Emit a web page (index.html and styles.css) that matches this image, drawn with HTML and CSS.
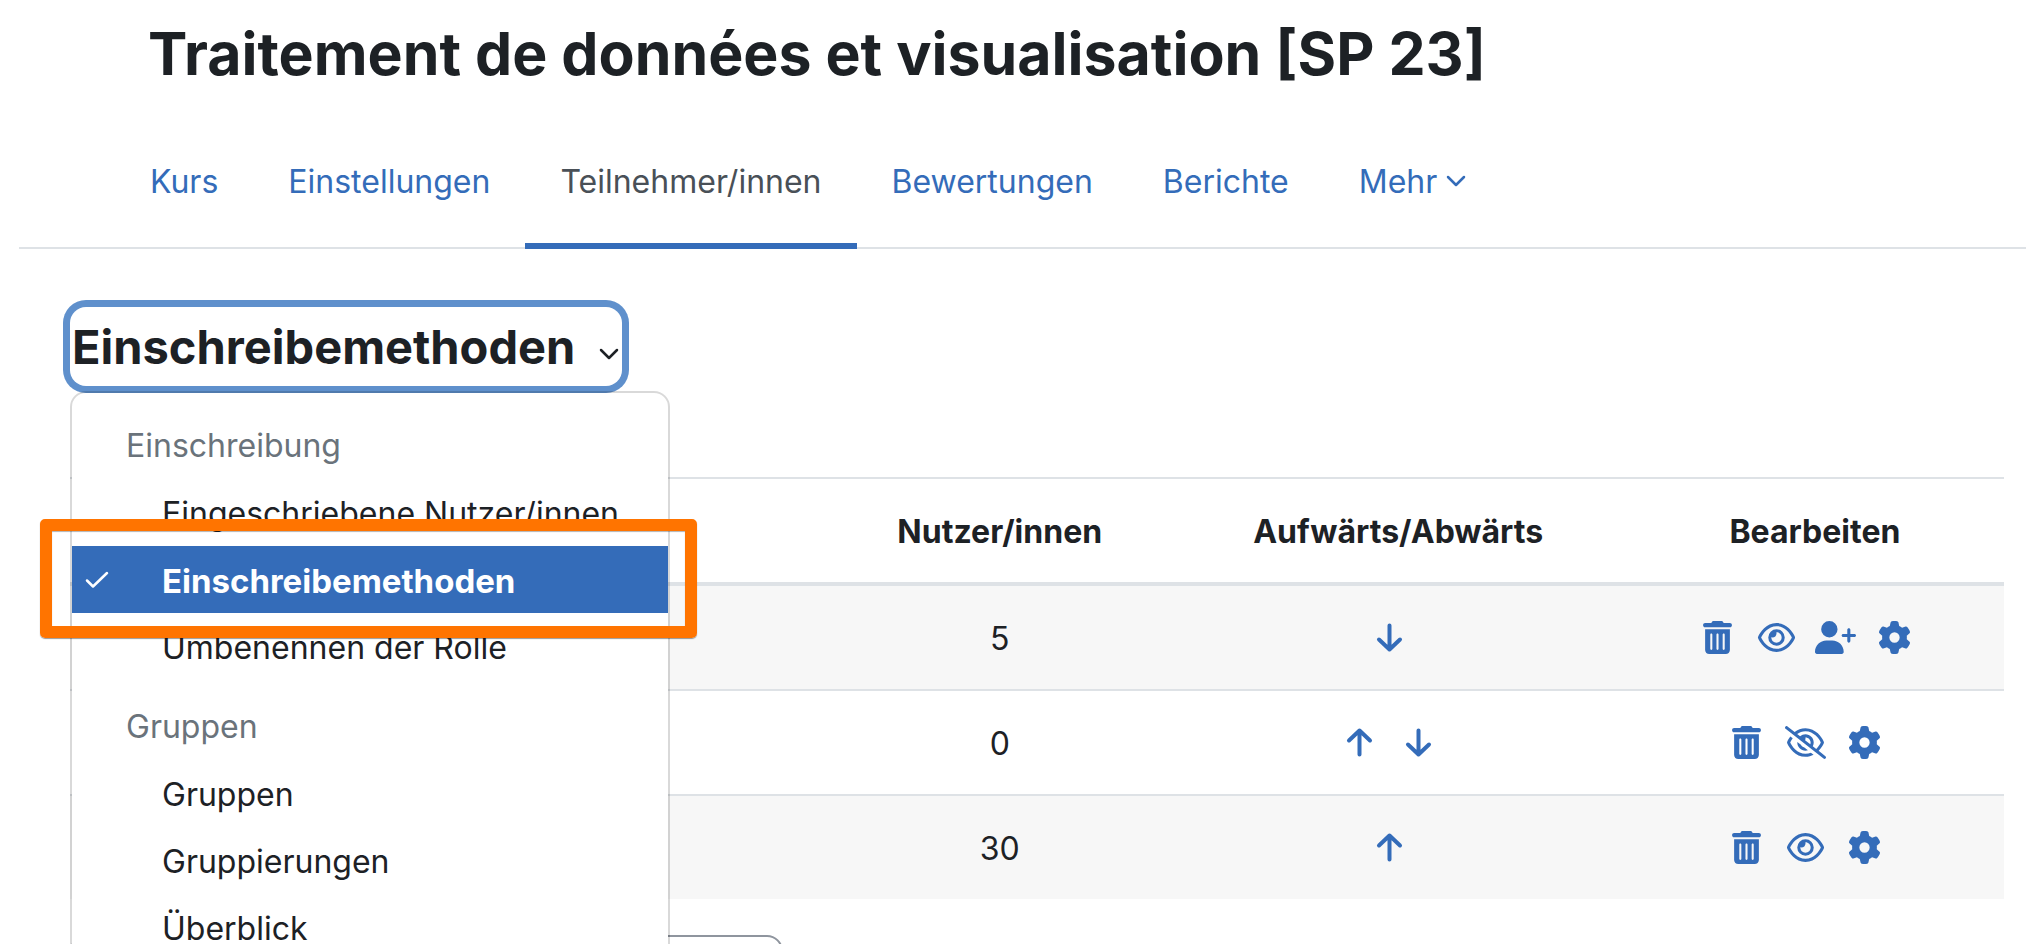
FILE: index.html
```html
<!DOCTYPE html>
<html lang="de">
<head>
<meta charset="utf-8">
<title>Einschreibemethoden</title>
<link rel="stylesheet" href="styles.css">
</head>
<body>
<svg class="sprite" aria-hidden="true">
  <symbol id="trash" viewBox="0 0 448 512"><path d="M135.2 17.7C140.6 6.8 151.7 0 163.8 0H284.2c12.1 0 23.2 6.8 28.6 17.7L320 32h96c17.7 0 32 14.3 32 32s-14.3 32-32 32H32C14.3 96 0 81.7 0 64S14.3 32 32 32h96l7.2-14.3zM32 128H416V448c0 35.3-28.7 64-64 64H96c-35.3 0-64-28.7-64-64V128zm96 64c-8.800 0-16 7.200-16 16V432c0 8.800 7.200 16 16 16s16-7.200 16-16V208c0-8.800-7.200-16-16-16zm96 0c-8.800 0-16 7.200-16 16V432c0 8.800 7.200 16 16 16s16-7.200 16-16V208c0-8.800-7.200-16-16-16zm96 0c-8.800 0-16 7.200-16 16V432c0 8.800 7.200 16 16 16s16-7.200 16-16V208c0-8.800-7.200-16-16-16z"/></symbol>
  <symbol id="eye" viewBox="0 0 576 512"><path d="M288 80c-65.2 0-118.8 29.6-159.9 67.7C89.6 183.5 63 226 49.4 256c13.6 30 40.2 72.5 78.6 108.3C169.2 402.4 222.8 432 288 432s118.8-29.6 159.9-67.7C486.4 328.5 513 286 526.6 256c-13.6-30-40.2-72.5-78.6-108.3C406.8 109.6 353.2 80 288 80zM95.4 112.6C142.5 68.8 207.2 32 288 32s145.5 36.8 192.6 80.6c46.8 43.5 78.1 95.4 93 131.1c3.3 7.9 3.3 16.7 0 24.6c-14.9 35.7-46.2 87.7-93 131.1C433.5 443.2 368.8 480 288 480s-145.5-36.8-192.6-80.6C48.6 356 17.3 304 2.5 268.3c-3.3-7.9-3.3-16.7 0-24.6C17.3 208 48.6 156 95.4 112.6zM288 336c44.2 0 80-35.8 80-80s-35.8-80-80-80c-.7 0-1.3 0-2 0c1.3 5.1 2 10.5 2 16c0 35.3-28.7 64-64 64c-5.500 0-10.900-.7-16-2c0 .7 0 1.3 0 2c0 44.2 35.8 80 80 80zm0-208a128 128 0 1 1 0 256 128 128 0 1 1 0-256z"/></symbol>
  <symbol id="eye-slash" viewBox="0 0 640 512"><path d="M38.8 5.1C28.4-3.1 13.3-1.2 5.1 9.2S-1.2 34.7 9.2 42.9l592 464c10.4 8.2 25.5 6.3 33.7-4.1s6.3-25.5-4.1-33.7L525.6 386.7c39.6-40.6 66.4-86.1 79.9-118.4c3.3-7.9 3.3-16.7 0-24.6c-14.9-35.7-46.2-87.7-93-131.1C465.5 68.8 400.8 32 320 32c-68.2 0-125 26.3-169.3 60.8L38.8 5.1zm151 118.3C226 97.7 269.5 80 320 80c65.2 0 118.8 29.6 159.9 67.7C518.4 183.5 545 226 558.6 256c-12.6 28-36.6 66.8-70.9 100.9l-53.8-42.2c9.1-17.6 14.2-37.5 14.2-58.7c0-70.7-57.3-128-128-128c-32.2 0-61.7 11.9-84.2 31.5l-46.1-36.1zM394.9 284.2l-81.5-63.9c4.2-8.5 6.6-18.2 6.6-28.3c0-5.5-.7-10.9-2-16c.7 0 1.3 0 2 0c44.2 0 80 35.8 80 80c0 9.9-1.8 19.4-5.1 28.2zm9.4 130.3C378.8 425.4 350.7 432 320 432c-65.2 0-118.8-29.6-159.9-67.7C121.6 328.5 95 286 81.4 256c8.3-18.4 21.5-41.5 39.4-64.8L83.1 161.5C60.3 191.2 44 220.8 34.5 243.7c-3.3 7.9-3.3 16.7 0 24.6c14.9 35.7 46.2 87.7 93 131.1C174.5 443.2 239.2 480 320 480c47.8 0 89.9-12.9 126.2-32.5l-41.9-33zM192 256c0 70.7 57.3 128 128 128c13.3 0 26.1-2 38.2-5.8L302 334c-23.5-5.4-43.1-21.2-53.7-42.3l-56.1-44.2c-.2 2.8-.3 5.6-.3 8.5z"/></symbol>
  <symbol id="user-plus" viewBox="0 0 640 512"><path d="M96 128a128 128 0 1 1 256 0A128 128 0 1 1 96 128zM0 482.3C0 383.8 79.8 304 178.3 304h91.4C368.2 304 448 383.8 448 482.3c0 16.4-13.3 29.7-29.7 29.7H29.7C13.3 512 0 498.7 0 482.3zM504 312V248H440c-13.3 0-24-10.7-24-24s10.7-24 24-24h64V136c0-13.3 10.7-24 24-24s24 10.7 24 24v64h64c13.3 0 24 10.7 24 24s-10.7 24-24 24H552v64c0 13.3-10.7 24-24 24s-24-10.7-24-24z"/></symbol>
  <symbol id="gear" viewBox="0 0 512 512"><path d="M495.9 166.6c3.2 8.7 .5 18.4-6.4 24.6l-43.3 39.4c1.1 8.3 1.7 16.8 1.7 25.4s-.6 17.1-1.7 25.4l43.3 39.4c6.9 6.2 9.6 15.9 6.4 24.6c-4.4 11.9-9.7 23.3-15.8 34.3l-4.7 8.1c-6.6 11-14 21.4-22.1 31.2c-5.9 7.2-15.7 9.6-24.5 6.8l-55.7-17.7c-13.4 10.3-28.2 18.9-44 25.4l-12.5 57.1c-2 9.1-9 16.3-18.2 17.8c-13.8 2.3-28 3.5-42.5 3.5s-28.7-1.2-42.5-3.5c-9.2-1.5-16.2-8.7-18.2-17.8l-12.5-57.1c-15.8-6.5-30.6-15.1-44-25.4L83.1 425.9c-8.8 2.8-18.6 .3-24.5-6.8c-8.1-9.8-15.5-20.2-22.1-31.2l-4.7-8.1c-6.1-11-11.4-22.4-15.8-34.3c-3.2-8.7-.5-18.4 6.4-24.6l43.3-39.4C64.6 273.1 64 264.6 64 256s.6-17.1 1.700-25.4L22.4 191.2c-6.9-6.2-9.6-15.9-6.4-24.6c4.4-11.9 9.7-23.3 15.8-34.3l4.7-8.1c6.6-11 14-21.4 22.1-31.2c5.9-7.2 15.7-9.6 24.5-6.8l55.7 17.7c13.4-10.3 28.2-18.9 44-25.4l12.5-57.1c2-9.1 9-16.3 18.2-17.8C227.3 1.2 241.5 0 256 0s28.7 1.2 42.5 3.5c9.2 1.5 16.2 8.7 18.2 17.8l12.5 57.1c15.8 6.5 30.6 15.1 44 25.4l55.7-17.7c8.8-2.8 18.6-.3 24.5 6.8c8.1 9.8 15.5 20.2 22.1 31.2l4.7 8.1c6.1 11 11.4 22.4 15.8 34.3zM256 336a80 80 0 1 0 0-160 80 80 0 1 0 0 160z"/></symbol>
  <symbol id="down" viewBox="0 0 33 33"><path class="line" d="M16.500 4.500V28.500M6 18.500l10.500 10 10.500-10"/></symbol>
  <symbol id="up" viewBox="0 0 33 33"><path class="line" d="M16.500 28.500V4.500M6 14.500l10.500-10 10.500 10"/></symbol>
  <symbol id="chevron" viewBox="0 0 20 12"><path class="thin" d="M2 2l8 8 8-8"/></symbol>
  <symbol id="check" viewBox="0 0 24 18"><path class="thin" d="M2 9.500l6 6L22 2"/></symbol>
</svg>

<header class="course-header">
  <h1 class="course-title">Traitement de données et visualisation [SP 23]</h1>
</header>

<nav class="tabs" aria-label="Kursnavigation">
  <a class="tab" href="#">Kurs</a>
  <a class="tab" href="#">Einstellungen</a>
  <a class="tab tab-active" href="#" aria-current="page">Teilnehmer/innen</a>
  <a class="tab" href="#">Bewertungen</a>
  <a class="tab" href="#">Berichte</a>
  <a class="tab" href="#">Mehr<svg class="chevron"><use href="#chevron"/></svg></a>
</nav>

<main class="content">
  <div class="picker">
    <button class="picker-button" type="button" aria-haspopup="listbox" aria-expanded="true">Einschreibemethoden<svg class="chevron"><use href="#chevron"/></svg></button>
    <div class="menu">
      <div class="menu-heading">Einschreibung</div>
      <a class="menu-item" href="#">Eingeschriebene Nutzer/innen</a>
      <a class="menu-item menu-item-selected" href="#" aria-current="true"><svg class="check"><use href="#check"/></svg>Einschreibemethoden</a>
      <a class="menu-item" href="#">Umbenennen der Rolle</a>
      <div class="menu-heading">Gruppen</div>
      <a class="menu-item" href="#">Gruppen</a>
      <a class="menu-item" href="#">Gruppierungen</a>
      <a class="menu-item" href="#">Überblick</a>
    </div>
    <div class="highlight"></div>
  </div>

  <table class="methods">
    <colgroup><col class="col-name"><col class="col-users"><col class="col-order"><col class="col-edit"></colgroup>
    <thead>
      <tr><td></td><th scope="col">Nutzer/innen</th><th scope="col">Aufwärts/Abwärts</th><th scope="col">Bearbeiten</th></tr>
    </thead>
    <tbody>
      <tr>
        <td></td><td>5</td>
        <td><div class="actions"><a href="#" aria-label="Abwärts"><svg class="icon"><use href="#down"/></svg></a></div></td>
        <td><div class="actions"><a href="#" aria-label="Löschen"><svg class="icon"><use href="#trash"/></svg></a><a href="#" aria-label="Deaktivieren"><svg class="icon"><use href="#eye"/></svg></a><a href="#" aria-label="Nutzer einschreiben"><svg class="icon"><use href="#user-plus"/></svg></a><a href="#" aria-label="Bearbeiten"><svg class="icon"><use href="#gear"/></svg></a></div></td>
      </tr>
      <tr>
        <td></td><td>0</td>
        <td><div class="actions"><a href="#" aria-label="Aufwärts"><svg class="icon"><use href="#up"/></svg></a><a href="#" aria-label="Abwärts"><svg class="icon"><use href="#down"/></svg></a></div></td>
        <td><div class="actions"><a href="#" aria-label="Löschen"><svg class="icon"><use href="#trash"/></svg></a><a href="#" aria-label="Aktivieren"><svg class="icon"><use href="#eye-slash"/></svg></a><a href="#" aria-label="Bearbeiten"><svg class="icon"><use href="#gear"/></svg></a></div></td>
      </tr>
      <tr>
        <td></td><td>30</td>
        <td><div class="actions"><a href="#" aria-label="Aufwärts"><svg class="icon"><use href="#up"/></svg></a></div></td>
        <td><div class="actions"><a href="#" aria-label="Löschen"><svg class="icon"><use href="#trash"/></svg></a><a href="#" aria-label="Deaktivieren"><svg class="icon"><use href="#eye"/></svg></a><a href="#" aria-label="Bearbeiten"><svg class="icon"><use href="#gear"/></svg></a></div></td>
      </tr>
    </tbody>
  </table>

  <select class="add-method" aria-label="Methode hinzufügen"></select>
</main>
</body>
</html>
```
FILE: styles.css
```css
* {
  box-sizing: border-box;
}

body {
  margin: 0;
  height: 100vh;
  overflow: hidden;
  background: #fff;
  color: #1d2125;
  font-family: Inter, "Liberation Sans", sans-serif;
  font-size: 32px;
  line-height: 48px;
}

a {
  color: #346cb9;
  text-decoration: none;
}

.sprite {
  position: absolute;
  width: 0;
  height: 0;
}

.line,
.thin {
  fill: none;
  stroke: currentColor;
  stroke-linecap: round;
  stroke-linejoin: round;
}

.line {
  stroke-width: 4;
}

.thin {
  stroke-width: 2.5;
}

.course-header {
  padding: 16px 148px 0;
}

.course-title {
  margin: 0;
  font-size: 59px;
  line-height: 76px;
  font-weight: 700;
}

.tabs {
  display: flex;
  margin: 20px 0 0 19px;
  padding-left: 96px;
  border-bottom: 2px solid #dee2e6;
}

.tab {
  display: flex;
  align-items: center;
  gap: 9px;
  height: 137px;
  margin-bottom: -2px;
  padding: 8px 35px 0;
  border-bottom: 6px solid transparent;
}

.tab-active {
  border-bottom-color: #346cb9;
  color: #495057;
}

.chevron {
  width: 20px;
  height: 12px;
}

.tab .chevron {
  margin-bottom: 2px;
}

.content {
  padding: 58px 22px 0 70px;
}

.picker {
  position: relative;
  width: max-content;
}

.picker-button {
  display: flex;
  align-items: center;
  gap: 24px;
  height: 79px;
  padding: 0 3px 0 2px;
  border: 0;
  border-radius: 16px;
  background: #fff;
  box-shadow: 0 0 0 7px #5f90cc;
  color: inherit;
  font: 700 47px/60px Inter, "Liberation Sans", sans-serif;
}

.picker-button .chevron {
  margin-top: 14px;
}

.menu {
  position: absolute;
  top: 84px;
  left: 0;
  z-index: 1;
  min-width: 600px;
  padding: 18px 0;
  border: 2px solid rgba(0, 0, 0, 0.15);
  border-radius: 16px;
  background: #fff;
  background-clip: padding-box;
  white-space: nowrap;
}

.menu-heading,
.menu-item {
  display: block;
  padding: 11px 48px 8px 54px;
}

.menu-heading {
  padding-bottom: 9px;
  color: #6a737b;
}

.menu-item {
  position: relative;
  padding-left: 90px;
  color: #1d2125;
}

.menu-item + .menu-heading {
  margin-top: 12px;
}

.menu-item-selected {
  background: #346cb9;
  color: #fff;
  font-size: 33px;
  font-weight: 700;
}

.check {
  position: absolute;
  top: 25px;
  left: 13px;
  width: 24px;
  height: 18px;
}

.highlight {
  position: absolute;
  top: 212px;
  left: -30px;
  z-index: 2;
  width: 657px;
  height: 119px;
  border: 12px solid #ff7400;
  border-radius: 5px;
  box-shadow: 0 1px 1px rgba(0, 0, 0, 0.4), inset 0 1px 1px rgba(0, 0, 0, 0.3);
}

.methods {
  width: 100%;
  margin-top: 91px;
  border-collapse: separate;
  border-spacing: 0;
  table-layout: fixed;
  text-align: center;
}

.col-name {
  width: 39.3%;
}

.col-users {
  width: 17.6%;
}

.col-order {
  width: 23.6%;
}

.col-edit {
  width: 19.5%;
}

.methods th,
.methods td {
  height: 105px;
  padding: 2px 17px 0 16px;
  border-top: 2px solid #dee2e6;
  font-weight: 400;
  vertical-align: middle;
}

.methods thead th,
.methods thead td {
  height: 107px;
  border-bottom: 2px solid #dee2e6;
  font-weight: 700;
}

.methods tbody tr:nth-child(odd) {
  background: #f7f7f7;
}

.actions {
  display: flex;
  justify-content: center;
  padding-bottom: 2px;
}

.actions a {
  display: flex;
  margin-right: 18px;
}

.icon {
  width: 41px;
  height: 33px;
  fill: currentColor;
}

.add-method {
  display: block;
  width: 713px;
  height: 76px;
  margin-top: 36px;
  border: 2px solid #8f959e;
  border-radius: 16px;
  background: #fff;
  appearance: none;
}
```
